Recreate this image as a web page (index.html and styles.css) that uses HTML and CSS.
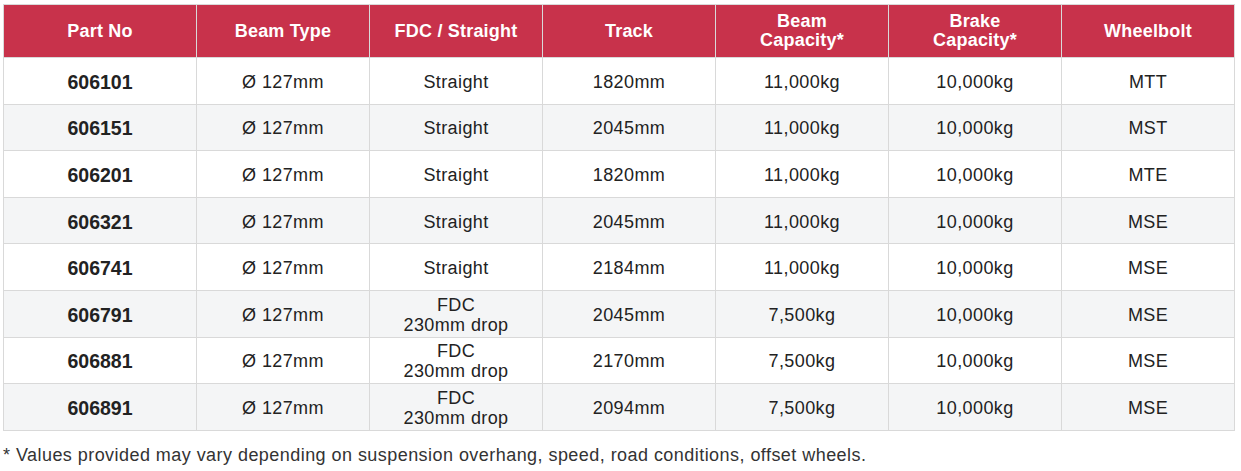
FILE: index.html
```html
<!DOCTYPE html>
<html lang="en">
<head>
<meta charset="utf-8">
<title>Beam specifications</title>
<link rel="stylesheet" href="styles.css">
</head>
<body>
<div class="page">
  <table class="spec">
    <colgroup>
      <col class="c-first">
      <col class="c"><col class="c"><col class="c"><col class="c"><col class="c"><col class="c">
    </colgroup>
    <thead>
      <tr>
        <th>Part No</th>
        <th>Beam Type</th>
        <th>FDC / Straight</th>
        <th>Track</th>
        <th>Beam<br>Capacity*</th>
        <th>Brake<br>Capacity*</th>
        <th>Wheelbolt</th>
      </tr>
    </thead>
    <tbody>
      <tr><td class="part">606101</td><td>Ø 127mm</td><td>Straight</td><td>1820mm</td><td>11,000kg</td><td>10,000kg</td><td>MTT</td></tr>
      <tr><td class="part">606151</td><td>Ø 127mm</td><td>Straight</td><td>2045mm</td><td>11,000kg</td><td>10,000kg</td><td>MST</td></tr>
      <tr><td class="part">606201</td><td>Ø 127mm</td><td>Straight</td><td>1820mm</td><td>11,000kg</td><td>10,000kg</td><td>MTE</td></tr>
      <tr><td class="part">606321</td><td>Ø 127mm</td><td>Straight</td><td>2045mm</td><td>11,000kg</td><td>10,000kg</td><td>MSE</td></tr>
      <tr><td class="part">606741</td><td>Ø 127mm</td><td>Straight</td><td>2184mm</td><td>11,000kg</td><td>10,000kg</td><td>MSE</td></tr>
      <tr><td class="part">606791</td><td>Ø 127mm</td><td>FDC<br>230mm drop</td><td>2045mm</td><td>7,500kg</td><td>10,000kg</td><td>MSE</td></tr>
      <tr><td class="part">606881</td><td>Ø 127mm</td><td>FDC<br>230mm drop</td><td>2170mm</td><td>7,500kg</td><td>10,000kg</td><td>MSE</td></tr>
      <tr><td class="part">606891</td><td>Ø 127mm</td><td>FDC<br>230mm drop</td><td>2094mm</td><td>7,500kg</td><td>10,000kg</td><td>MSE</td></tr>
    </tbody>
  </table>
  <p class="note">* Values provided may vary depending on suspension overhang, speed, road conditions, offset wheels.</p>
</div>
</body>
</html>
```

FILE: styles.css
```css
html, body {
  margin: 0;
  padding: 0;
  background: #ffffff;
}

body {
  font-family: "Liberation Sans", Arial, Helvetica, sans-serif;
  color: #222222;
}

.page {
  padding: 4px 0 0 3px;
}

.spec {
  border-collapse: collapse;
  table-layout: fixed;
  width: 1231px;
}

.c-first { width: 193px; }
.c { width: 173px; }

.spec th,
.spec td {
  border: 1px solid #d9d9d9;
  text-align: center;
  vertical-align: middle;
  padding: 0;
}

.spec th {
  background: #c8324b;
  color: #ffffff;
  font-weight: bold;
  font-size: 18px;
  line-height: 19px;
  letter-spacing: 0.2px;
  height: 52px;
}

.spec td {
  font-size: 18px;
  line-height: 20px;
  letter-spacing: 0.4px;
  height: 46.6px;
  padding-top: 2px;
  box-sizing: border-box;
  color: #222222;
}

.spec tbody tr:nth-child(even) td {
  background: #f4f5f6;
}

.spec td.part {
  font-weight: bold;
  font-size: 19.5px;
  letter-spacing: 0;
}

.note {
  margin: 14px 0 0 0;
  font-size: 18px;
  line-height: 20px;
  letter-spacing: 0.45px;
  color: #333333;
}
```
